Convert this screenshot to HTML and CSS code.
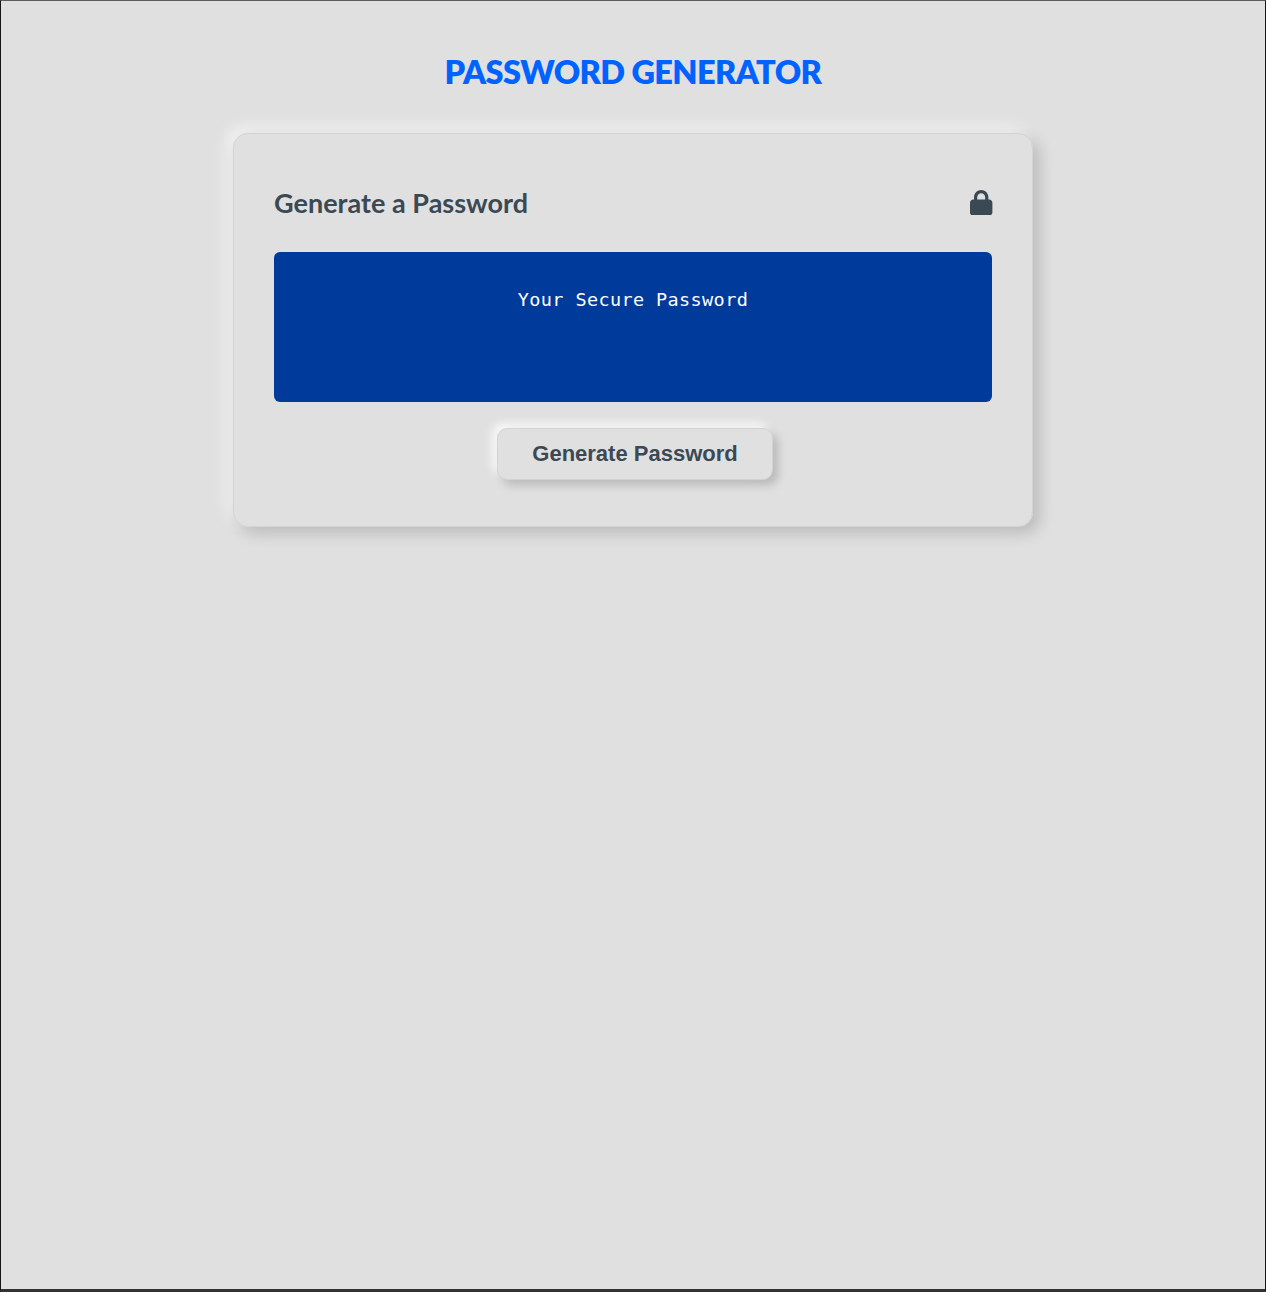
FILE: index.html
```html
<!DOCTYPE html>
<html lang="en">
<head>
<meta charset="UTF-8">
<title>Password Generator</title>
<link rel="stylesheet" href="styles.css">
</head>
<body>
<div class="wrapper">
  <header><h1>Password Generator</h1></header>
  <main class="card">
    <div class="card-header">
      <h2>Generate a Password</h2>
      <svg class="lock" viewBox="0 0 448 512" aria-hidden="true"><path d="M144 144v48h160v-48c0-44.200-35.800-80-80-80s-80 35.800-80 80zM80 192v-48C80 64.500 144.500 0 224 0s144 64.500 144 144v48h16c35.300 0 64 28.700 64 64v192c0 35.300-28.700 64-64 64H64c-35.300 0-64-28.700-64-64V256c0-35.300 28.700-64 64-64h16z"/></svg>
    </div>
    <div class="password">Your Secure Password</div>
    <div class="card-footer"><button class="btn">Generate Password</button></div>
  </main>
</div>
</body>
</html>
```

FILE: styles.css
```css
*, *::before, *::after { box-sizing: border-box; }
body {
  margin: 0;
  background: #e0e0e0;
  color: #3b4954;
  font-family: Lato, sans-serif;
}
.wrapper {
  min-height: 1292px;
  border: 1px solid #151515;
  border-top-color: #5f5c5f;
  border-bottom: 3px solid #353233;
}
h1 {
  margin: 51px 0 41px;
  font-size: 32.500px;
  font-weight: 800;
  line-height: 40px;
  letter-spacing: -0.58px;
  text-align: center;
  text-transform: uppercase;
  color: #0062ff;
}
.card {
  width: 800px;
  height: 394px;
  margin: 0 auto;
  padding: 48px 40px 0;
  border: 1px solid #d3d3d3;
  border-radius: 15px;
  box-shadow: 6px 6px 16px rgba(0, 0, 0, 0.18), -6px -6px 16px rgba(255, 255, 255, 0.65);
}
.card-header {
  display: flex;
  align-items: center;
  justify-content: space-between;
  height: 42px;
}
h2 { margin: 0; font-size: 27px; font-weight: 700; line-height: 42px; letter-spacing: 0.02px; }
.lock { width: 22.400px; height: 25.600px; margin: -1px -0.5px 0 0; fill: #3b4954; }
.password {
  height: 150px;
  margin-top: 28px;
  padding-top: 36px;
  border-radius: 6px;
  background: #003a9b;
  color: #fff;
  font: 18.500px/24px "DejaVu Sans Mono", monospace;
  letter-spacing: 0.38px;
  text-align: center;
}
.card-footer { display: flex; justify-content: center; margin: 26px 0 0 4px; }
.btn {
  width: 276px;
  height: 52px;
  padding: 0;
  border: 1px solid #d3d3d3;
  border-radius: 10px;
  background: #e0e0e0;
  color: #3b4954;
  font: 700 22px "Liberation Sans", Arial, sans-serif;
  box-shadow: 5px 5px 10px rgba(0, 0, 0, 0.18), -5px -5px 10px rgba(255, 255, 255, 0.8);
}
```
